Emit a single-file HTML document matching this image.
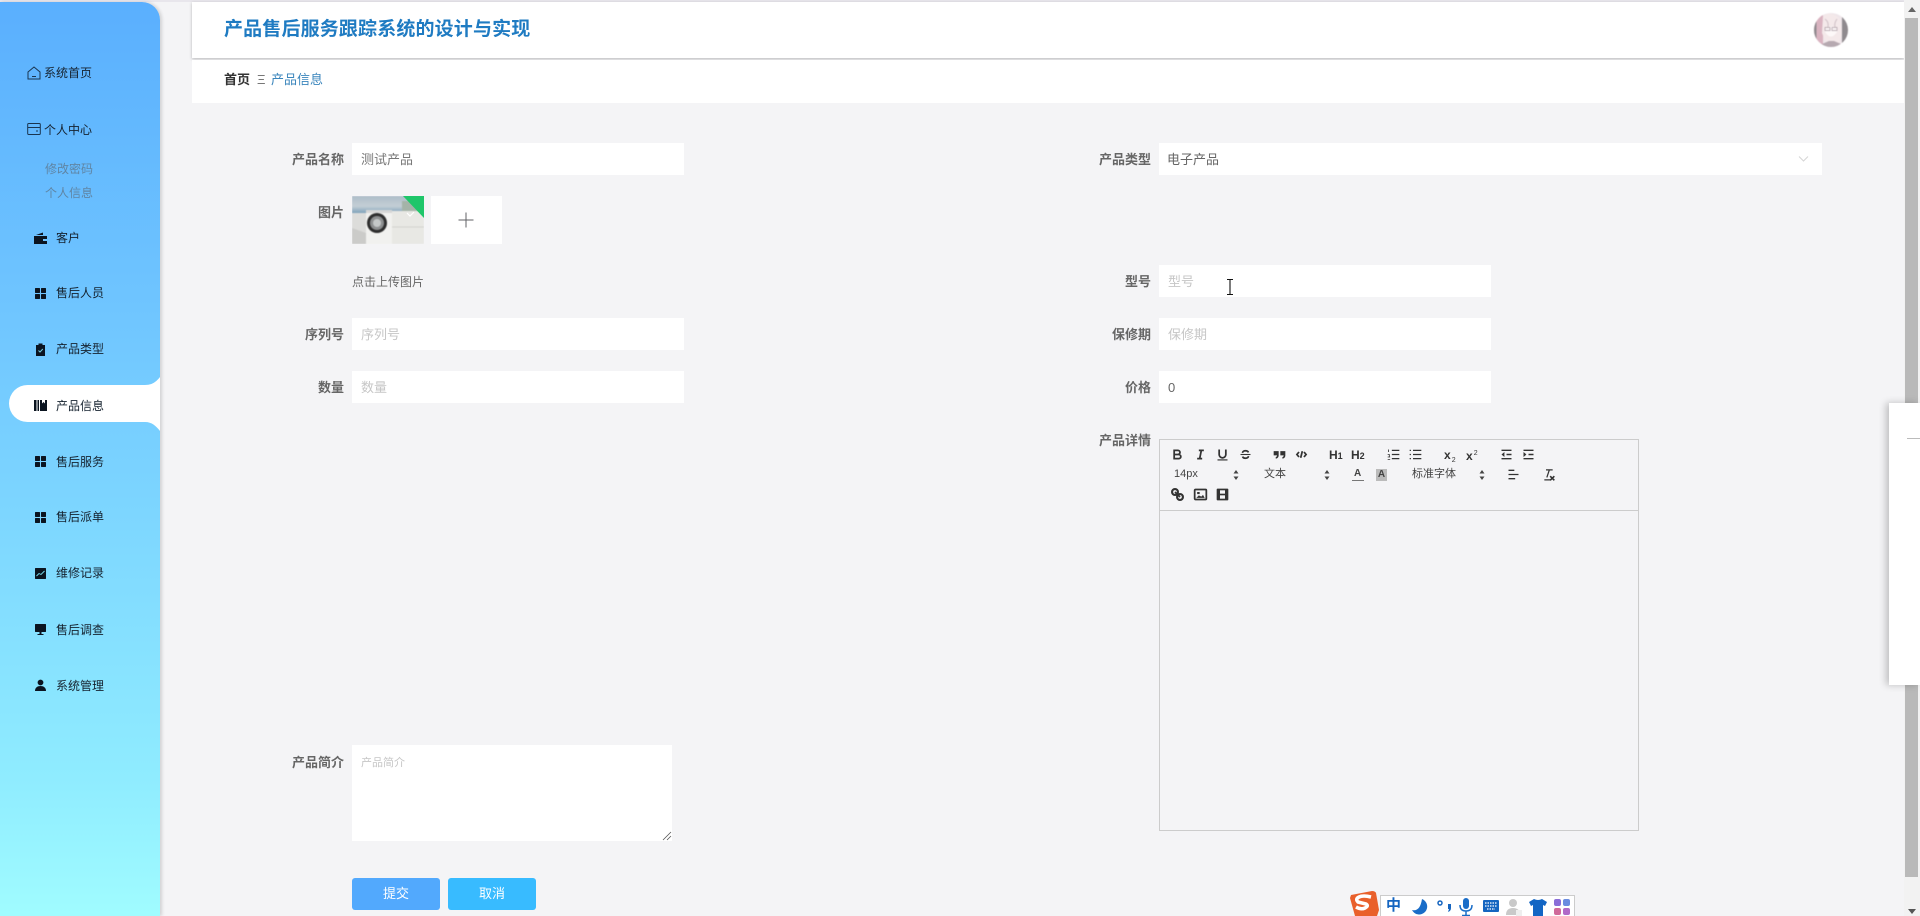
<!DOCTYPE html>
<html lang="zh-CN"><head><meta charset="utf-8"><title>产品信息</title>
<style>
*{box-sizing:border-box;margin:0;padding:0}
html,body{width:1920px;height:916px;overflow:hidden;background:#f4f4f6;font-family:"Liberation Sans","Noto Sans CJK SC",sans-serif}
.a{position:absolute}
#top{left:0;top:0;width:1920px;height:2px;background:#e8e6ec}
#side{left:0;top:2px;width:160px;height:914px;background:linear-gradient(180deg,#5aaffe 0%,#70c6ff 35%,#8fecff 85%,#a0fcff 100%);border-radius:0 18px 0 0;box-shadow:2px 0 3px rgba(0,0,0,.14)}
.m{position:absolute;font-size:12px;line-height:18px;color:#15222f;white-space:nowrap}
.s{position:absolute;font-size:12px;line-height:18px;color:#5f85a4;white-space:nowrap;left:45px}
.i{position:absolute;left:34px;width:13px;height:13px;fill:#0b1420}
.o{position:absolute;left:27px;width:14px;height:14px;fill:none;stroke:#1a3550;stroke-width:1}
#hd{left:192px;top:2px;width:1712px;height:56px;background:#fff;box-shadow:0 1px 3px rgba(0,0,0,.25)}
#tt{left:224px;top:17px;font-size:19px;line-height:26px;font-weight:700;color:#1f7bc2;white-space:nowrap;letter-spacing:.15px}
#bc{left:192px;top:60px;width:1712px;height:43px;background:#fff}
.l{position:absolute;width:100px;text-align:right;font-size:13px;font-weight:700;color:#666;line-height:20px;white-space:nowrap;margin-top:1px}
.f{position:absolute;background:#fff;height:32px;font-size:13px;line-height:33px;padding-left:9px;color:#777;white-space:nowrap}
.p{color:#c6c6c6}
.t{position:absolute;width:15px;height:15px;fill:none;stroke:#333;stroke-width:2.1}
.d{position:absolute;font-size:11px;line-height:14px;color:#444;white-space:nowrap}
.ar{position:absolute;width:6px;height:10px}
.h{position:absolute;font-size:12px;font-weight:700;line-height:14px;color:#333;white-space:nowrap}
.h small{font-size:9px}
.b{position:absolute;top:878px;width:88px;height:32px;border-radius:3px;color:#fff;font-size:13px;line-height:31px;text-align:center}
.ime{position:absolute;top:898px;width:18px;height:18px}
</style></head><body>
<div class="a" id="top"></div>
<div class="a" id="side"></div>

<svg class="o" style="top:66px" viewBox="0 0 14 14"><path d="M1 6 7 1l6 5v7H1z"/><path d="M5 10.500h4"/></svg>
<div class="m" style="left:44px;top:64px">系统首页</div>
<svg class="o" style="top:122px" viewBox="0 0 14 14"><rect x=".7" y="1.500" width="12.600" height="11" rx="1"/><path d="M1 5.500h12M9 9h2"/></svg>
<div class="m" style="left:44px;top:121px">个人中心</div>
<div class="s" style="top:160px">修改密码</div>
<div class="s" style="top:184px">个人信息</div>

<svg class="i" style="top:232px" viewBox="0 0 13 13"><path d="M0 4h13v8H0zM2 3l7-2.500V3z"/><rect x="9" y="7" width="4" height="2" fill="#6fc4ff"/></svg>
<div class="m" style="left:56px;top:229px">客户</div>
<svg class="i" style="top:287px" viewBox="0 0 13 13"><rect x="1" y="1" width="5" height="5" rx=".6"/><rect x="7" y="1" width="5" height="5" rx=".6"/><rect x="1" y="7" width="5" height="5" rx=".6"/><rect x="7" y="7" width="5" height="5" rx=".6"/></svg>
<div class="m" style="left:56px;top:284px">售后人员</div>
<svg class="i" style="top:343px" viewBox="0 0 13 13"><path d="M2 2h2.500V.5h4V2H11v11H2z"/><path d="M4.500 7.500 6 9l2.800-3" fill="none" stroke="#7cd" stroke-width="1"/></svg>
<div class="m" style="left:56px;top:340px">产品类型</div>

<svg class="a" style="left:9px;top:377px" width="151" height="54" viewBox="0 0 151 54"><path d="M18.500 8H136C143 8 147 5 151 0V54C147 49 143 45 136 45H18.500A18.500 18.500 0 0 1 18.500 8Z" fill="#fff"/></svg>
<svg class="i" style="top:399px" viewBox="0 0 13 13"><path d="M0 1h2.500v11H0zM3.500 1H5v11H3.500zM6 1h2v3.500L9.500 3 11 4.500V1h2v11H6z"/></svg>
<div class="m" style="left:56px;top:397px">产品信息</div>

<svg class="i" style="top:455px" viewBox="0 0 13 13"><rect x="1" y="1" width="5" height="5" rx=".6"/><rect x="7" y="1" width="5" height="5" rx=".6"/><rect x="1" y="7" width="5" height="5" rx=".6"/><rect x="7" y="7" width="5" height="5" rx=".6"/></svg>
<div class="m" style="left:56px;top:453px">售后服务</div>
<svg class="i" style="top:511px" viewBox="0 0 13 13"><rect x="1" y="1" width="5" height="5" rx=".6"/><rect x="7" y="1" width="5" height="5" rx=".6"/><rect x="1" y="7" width="5" height="5" rx=".6"/><rect x="7" y="7" width="5" height="5" rx=".6"/></svg>
<div class="m" style="left:56px;top:508px">售后派单</div>
<svg class="i" style="top:567px" viewBox="0 0 13 13"><rect x="1" y="1" width="11" height="11" rx=".6"/><path d="M2.500 9 5 6.500l2 1L10.500 4" fill="none" stroke="#7de" stroke-width=".9"/></svg>
<div class="m" style="left:56px;top:564px">维修记录</div>
<svg class="i" style="top:623px" viewBox="0 0 13 13"><rect x="1" y="1" width="11" height="8" rx=".6"/><path d="M5.500 9h2v2h2v1h-6v-1h2z"/></svg>
<div class="m" style="left:56px;top:621px">售后调查</div>
<svg class="i" style="top:679px" viewBox="0 0 13 13"><circle cx="6.500" cy="3.500" r="2.900"/><path d="M1 12c0-3.500 2.500-5 5.500-5s5.500 1.500 5.500 5z"/></svg>
<div class="m" style="left:56px;top:677px">系统管理</div>

<div class="a" id="hd"></div>
<div class="a" id="tt">产品售后服务跟踪系统的设计与实现</div>
<svg class="a" style="left:1814px;top:13px;filter:blur(.6px)" width="34" height="34" viewBox="0 0 34 34"><defs><clipPath id="c"><circle cx="17" cy="17" r="17"/></clipPath></defs><g clip-path="url(#c)"><rect width="34" height="34" fill="#efe6ea"/><rect width="9" height="34" fill="#d9b3c0"/><rect x="28" width="6" height="34" fill="#8f8a8e"/><rect width="2.500" height="34" fill="#8f8a8e"/><path d="M9 3q8-6 17 3l2 14-3 10H12L8 20z" fill="#f4e9ea"/><path d="M11 15q6-3 12 0v4q-6 9-12 0z" fill="#fdf8f8"/><path d="M11 14.500h5v3h-5zM18 14.500h5v3h-5z" fill="none" stroke="#a99aa2" stroke-width=".7"/><path d="M8 31l7-3h5l7 3v3H8z" fill="#b6a9b0"/><path d="M11 6q4 3 3 8M23 6q-3 4-2 8" fill="none" stroke="#cfc0c6" stroke-width="1"/></g></svg>

<div class="a" id="bc"></div>
<div class="a" style="left:224px;top:71px;font-size:13px;line-height:18px;font-weight:700;color:#333">首页</div>
<div class="a" style="left:257px;top:71px;font-size:13px;line-height:18px;color:#777">Ξ</div>
<div class="a" style="left:271px;top:71px;font-size:13px;line-height:18px;color:#3a85bc">产品信息</div>

<div class="l" style="left:244px;top:149px">产品名称</div>
<div class="f" style="left:352px;top:143px;width:332px">测试产品</div>
<div class="l" style="left:244px;top:202px">图片</div>
<svg class="a" style="left:352px;top:196px" width="72" height="48" viewBox="0 0 72 48"><defs><linearGradient id="sk" x1="0" y1="0" x2="0" y2="1"><stop offset="0" stop-color="#aebdc9"/><stop offset=".6" stop-color="#c3ced5"/><stop offset="1" stop-color="#7fa2ba"/></linearGradient></defs><g style="filter:blur(.5px)"><rect width="72" height="48" fill="#dcdcda"/><rect width="72" height="17" fill="url(#sk)"/><rect x="50" y="5" width="22" height="12" fill="#a4b3a8"/><rect x="40" y="15" width="32" height="33" fill="#e8e8e4"/><path d="M40 31h32" stroke="#d2d2ce"/><path d="M0 32l14 5v11H0z" fill="#cbcbc9"/><rect x="14" y="14" width="26" height="34" fill="#f1f1ef"/><rect x="14" y="14" width="26" height="3" fill="#d6d6d6"/><circle cx="25" cy="27" r="10" fill="#2d2d2d"/><circle cx="25" cy="27" r="7" fill="#8d8f90"/><circle cx="25" cy="27" r="4" fill="#c5c8c8"/></g><path d="M51 0h21v22z" fill="#1fc66a"/><path d="M55 17l3 3 4-4" fill="none" stroke="#fff" stroke-width="1.200"/></svg>
<div class="a" style="left:431px;top:196px;width:71px;height:48px;background:#fff"></div>
<svg class="a" style="left:458px;top:212px" width="16" height="16" viewBox="0 0 16 16"><path d="M8 .5v15M.5 8h15" stroke="#606266" stroke-width="1"/></svg>
<div class="a" style="left:352px;top:273px;font-size:12px;line-height:18px;color:#666">点击上传图片</div>
<div class="l" style="left:244px;top:324px">序列号</div>
<div class="f p" style="left:352px;top:318px;width:332px">序列号</div>
<div class="l" style="left:244px;top:377px">数量</div>
<div class="f p" style="left:352px;top:371px;width:332px">数量</div>
<div class="l" style="left:244px;top:752px">产品简介</div>
<div class="a" style="left:352px;top:745px;width:320px;height:96px;background:#fff;padding:10px 9px;font-size:11px;line-height:16px;color:#c6c6c6">产品简介</div>
<svg class="a" style="left:662px;top:831px" width="10" height="10" viewBox="0 0 10 10"><path d="M1 9 9 1M5 9l4-4" stroke="#555" stroke-width=".8"/></svg>
<div class="b" style="left:352px;background:#52a9fd">提交</div>
<div class="b" style="left:448px;background:#38bbff">取消</div>

<div class="l" style="left:1051px;top:149px">产品类型</div>
<div class="f" style="left:1159px;top:143px;width:663px;color:#666;padding-left:8px">电子产品</div>
<svg class="a" style="left:1798px;top:155px" width="11" height="8" viewBox="0 0 11 8"><path d="M1 1.500 5.500 6 10 1.500" fill="none" stroke="#d5d5d5"/></svg>
<div class="l" style="left:1051px;top:271px">型号</div>
<div class="f p" style="left:1159px;top:265px;width:332px">型号</div>
<svg class="a" style="left:1225px;top:279px" width="10" height="16" viewBox="0 0 10 16"><path d="M2 .5h6M2 15.500h6M5 .5v15" stroke="#111" stroke-width="1.100" fill="none"/></svg>
<div class="l" style="left:1051px;top:324px">保修期</div>
<div class="f p" style="left:1159px;top:318px;width:332px">保修期</div>
<div class="l" style="left:1051px;top:377px">价格</div>
<div class="f" style="left:1159px;top:371px;width:332px;color:#666">0</div>
<div class="l" style="left:1051px;top:430px">产品详情</div>

<div class="a" style="left:1159px;top:439px;width:480px;height:392px;border:1px solid #ccc"></div>
<div class="a" style="left:1159px;top:510px;width:480px;height:1px;background:#ccc"></div>

<!-- toolbar row 1 -->
<svg class="t" style="left:1170px;top:447px" viewBox="0 0 18 18"><path d="M5 4h4.500a2.500 2.500 0 0 1 0 5H5zM5 9h5.500a2.500 2.500 0 0 1 0 5H5z"/></svg>
<svg class="t" style="left:1193px;top:447px" viewBox="0 0 18 18"><path d="M7 4h6M5 14h6M8 14l2-10"/></svg>
<svg class="t" style="left:1215px;top:447px" viewBox="0 0 18 18"><path d="M5 3v6a4 4 0 0 0 8 0V3"/><path d="M3 15.500h12" stroke-width="1.400"/></svg>
<svg class="t" style="left:1238px;top:447px" viewBox="0 0 18 18"><path d="M3 9h12" stroke-width="1.300"/><path d="M12.500 6.500C12 5 10.500 4.500 9 4.500c-2 0-3.500 1-3.500 2.500M5.500 11.500C6 13 7.500 13.500 9 13.500c2 0 3.500-1 3.500-2.500"/></svg>
<svg class="t" style="left:1272px;top:447px;fill:#333;stroke:none" viewBox="0 0 18 18"><path d="M2 5h6v5c0 2-1 3.500-3.500 4V12c1 0 1.500-1 1.500-2H2zM10 5h6v5c0 2-1 3.500-3.500 4V12c1 0 1.500-1 1.500-2h-4z"/></svg>
<svg class="t" style="left:1294px;top:447px" viewBox="0 0 18 18"><path d="M6 6 3.500 9 6 12M12 6l2.500 3-2.500 3M10 5 8 13"/></svg>
<div class="h" style="left:1329px;top:448px">H<small>1</small></div>
<div class="h" style="left:1351px;top:448px">H<small>2</small></div>
<svg class="t" style="left:1386px;top:447px" viewBox="0 0 18 18"><path d="M7 4h9M7 9h9M7 14h9" stroke-width="1.500"/><path d="M3 3v3M2 12h3M2 9h2v3M2 15h3" stroke-width="1"/></svg>
<svg class="t" style="left:1408px;top:447px" viewBox="0 0 18 18"><path d="M6 4h10M6 9h10M6 14h10" stroke-width="1.500"/><path d="M2 4h1.500M2 9h1.500M2 14h1.500" stroke-width="1.500"/></svg>
<div class="h" style="left:1444px;top:448px">x<small style="font-size:7px;font-weight:400;vertical-align:-3px;margin-left:1px">2</small></div>
<div class="h" style="left:1466px;top:447px">x<small style="font-size:7px;font-weight:400;vertical-align:5px;margin-left:1px">2</small></div>
<svg class="t" style="left:1499px;top:447px" viewBox="0 0 18 18"><path d="M3 4h12M9 9h6M3 14h12" stroke-width="1.700"/><path d="M3 9l3.500-3v6z" fill="#333" stroke="none"/></svg>
<svg class="t" style="left:1521px;top:447px" viewBox="0 0 18 18"><path d="M3 4h12M9 9h6M3 14h12" stroke-width="1.700"/><path d="M6.500 9 3 6v6z" fill="#333" stroke="none"/></svg>

<!-- toolbar row 2 -->
<div class="d" style="left:1174px;top:467px">14px</div>
<svg class="ar" style="left:1233px;top:470px" viewBox="0 0 6 10"><path d="M3 0l2.500 3.500h-5zM3 10 .5 6.500h5z" fill="#444"/></svg>
<div class="d" style="left:1264px;top:467px">文本</div>
<svg class="ar" style="left:1324px;top:470px" viewBox="0 0 6 10"><path d="M3 0l2.500 3.500h-5zM3 10 .5 6.500h5z" fill="#444"/></svg>
<div class="d" style="left:1354px;top:467px;font-size:10px;font-weight:700">A</div>
<div class="a" style="left:1352px;top:480px;width:12px;height:1px;background:#777"></div>
<div class="d" style="left:1376px;top:469px;width:11px;height:12px;background:#bbb;font-size:10px;line-height:12px;text-align:center;font-weight:700">A</div>
<div class="d" style="left:1412px;top:467px">标准字体</div>
<svg class="ar" style="left:1479px;top:470px" viewBox="0 0 6 10"><path d="M3 0l2.500 3.500h-5zM3 10 .5 6.500h5z" fill="#444"/></svg>
<svg class="t" style="left:1506px;top:467px" viewBox="0 0 18 18"><path d="M3 4h7M3 9h12M3 14h8" stroke-width="1.600"/></svg>
<svg class="t" style="left:1541px;top:467px" viewBox="0 0 18 18"><path d="M6 3.500h8M4 15.500h8M10 3.500l-3 9" stroke-width="1.500"/><path d="M11 11l5 5M16 11l-5 5" stroke-width="1.900"/></svg>

<!-- toolbar row 3 -->
<svg class="t" style="left:1170px;top:487px" viewBox="0 0 18 18" stroke-width="2.500"><circle cx="6" cy="6" r="3.500" stroke-width="2.600"/><circle cx="12" cy="12" r="3.500" stroke-width="2.600"/><path d="M6 6l6 6"/></svg>
<svg class="t" style="left:1193px;top:487px" viewBox="0 0 18 18"><rect x="2" y="3" width="14" height="12" rx="1"/><rect x="5" y="6" width="3" height="2.500" fill="#333" stroke="none"/><path d="M4 13l3-3 3 1.500 2-2 2 3.500z" fill="#333" stroke="none"/></svg>
<svg class="t" style="left:1215px;top:487px;fill:#333;stroke:none" viewBox="0 0 18 18"><path d="M3 2h12a1 1 0 0 1 1 1v12a1 1 0 0 1-1 1H3a1 1 0 0 1-1-1V3a1 1 0 0 1 1-1z"/><rect x="6" y="4" width="6" height="4" fill="#f4f4f6"/><rect x="6" y="10" width="6" height="4" fill="#f4f4f6"/></svg>

<!-- scrollbar -->
<div class="a" style="left:1904px;top:0;width:16px;height:916px;background:#f2f2f2"></div>
<div class="a" style="left:1905px;top:18px;width:13px;height:859px;background:#b9b9b9"></div>
<svg class="a" style="left:1908px;top:7px" width="8" height="5" viewBox="0 0 8 5"><path d="M4 0l4 5H0z" fill="#666"/></svg>
<svg class="a" style="left:1908px;top:909px" width="8" height="5" viewBox="0 0 8 5"><path d="M4 5 8 0H0z" fill="#555"/></svg>

<!-- right floating panel -->
<div class="a" style="left:1889px;top:403px;width:31px;height:282px;background:#fff;box-shadow:-3px 0 7px rgba(0,0,0,.22)"></div>
<div class="a" style="left:1907px;top:438px;width:13px;height:1px;background:#bbb"></div>

<!-- sogou IME bar -->
<div class="a" style="left:1380px;top:895px;width:195px;height:21px;background:#fff;border:1px solid #ccc;border-bottom:none"></div>
<svg class="a" style="left:1349px;top:890px" width="30" height="26" viewBox="0 0 30 26"><path d="M2 5 23 1q3 0 4 2l3 17-2 6H6L1 8z" fill="#e9602b"/><path d="M22 7q-8-2-12 0t-1 5l8 2q3 2-1 4t-9-1" fill="none" stroke="#fff" stroke-width="3.500"/></svg>
<div class="a" style="left:1386px;top:896px;font-size:15px;line-height:20px;font-weight:700;color:#1565c0">中</div>
<svg class="ime" style="left:1411px" viewBox="0 0 18 18"><path d="M11 1a8 8 0 1 1-10 11q8 2 10-11z" fill="#1a6dc8"/></svg>
<svg class="ime" style="left:1435px" viewBox="0 0 18 18"><circle cx="5" cy="5" r="2" fill="none" stroke="#1565c0" stroke-width="1.500"/><path d="M13 6h3v4q0 3-3 4l1-3h-1z" fill="#1565c0"/></svg>
<svg class="ime" style="left:1457px" viewBox="0 0 18 18"><rect x="6" y="0" width="6" height="11" rx="3" fill="#1a6dc8"/><path d="M3 7q0 6 6 6t6-6M9 13v4M5 17.500h8" fill="none" stroke="#1a6dc8" stroke-width="1.500"/></svg>
<svg class="ime" style="left:1482px" viewBox="0 0 18 18"><rect x="1" y="2" width="16" height="12" rx="1" fill="#1565c0"/><path d="M3 5h12M3 8h12M5 11h8" stroke="#fff" stroke-width="1.300" stroke-dasharray="1.500 1"/></svg>
<svg class="ime" style="left:1505px" viewBox="0 0 18 18"><circle cx="8" cy="5" r="4" fill="#c9c9c9"/><path d="M1 17q0-7 7-7t7 7z" fill="#c9c9c9"/><rect x="11" y="12" width="6" height="6" fill="#eee"/></svg>
<svg class="ime" style="left:1529px" viewBox="0 0 18 18"><path d="M5 1q4 2 8 0l5 3-2 4-2-1v11H4V7L2 8 0 4z" fill="#1366c4"/></svg>
<svg class="ime" style="left:1553px" viewBox="0 0 18 18"><rect x="1" y="1" width="7" height="7" rx="2" fill="#8a6ed8"/><rect x="10" y="1" width="7" height="7" rx="2" fill="#6a8ce0"/><rect x="1" y="10" width="7" height="7" rx="2" fill="#d06a9a"/><rect x="10" y="10" width="7" height="7" rx="2" fill="#b06ac8"/></svg>
</body></html>
